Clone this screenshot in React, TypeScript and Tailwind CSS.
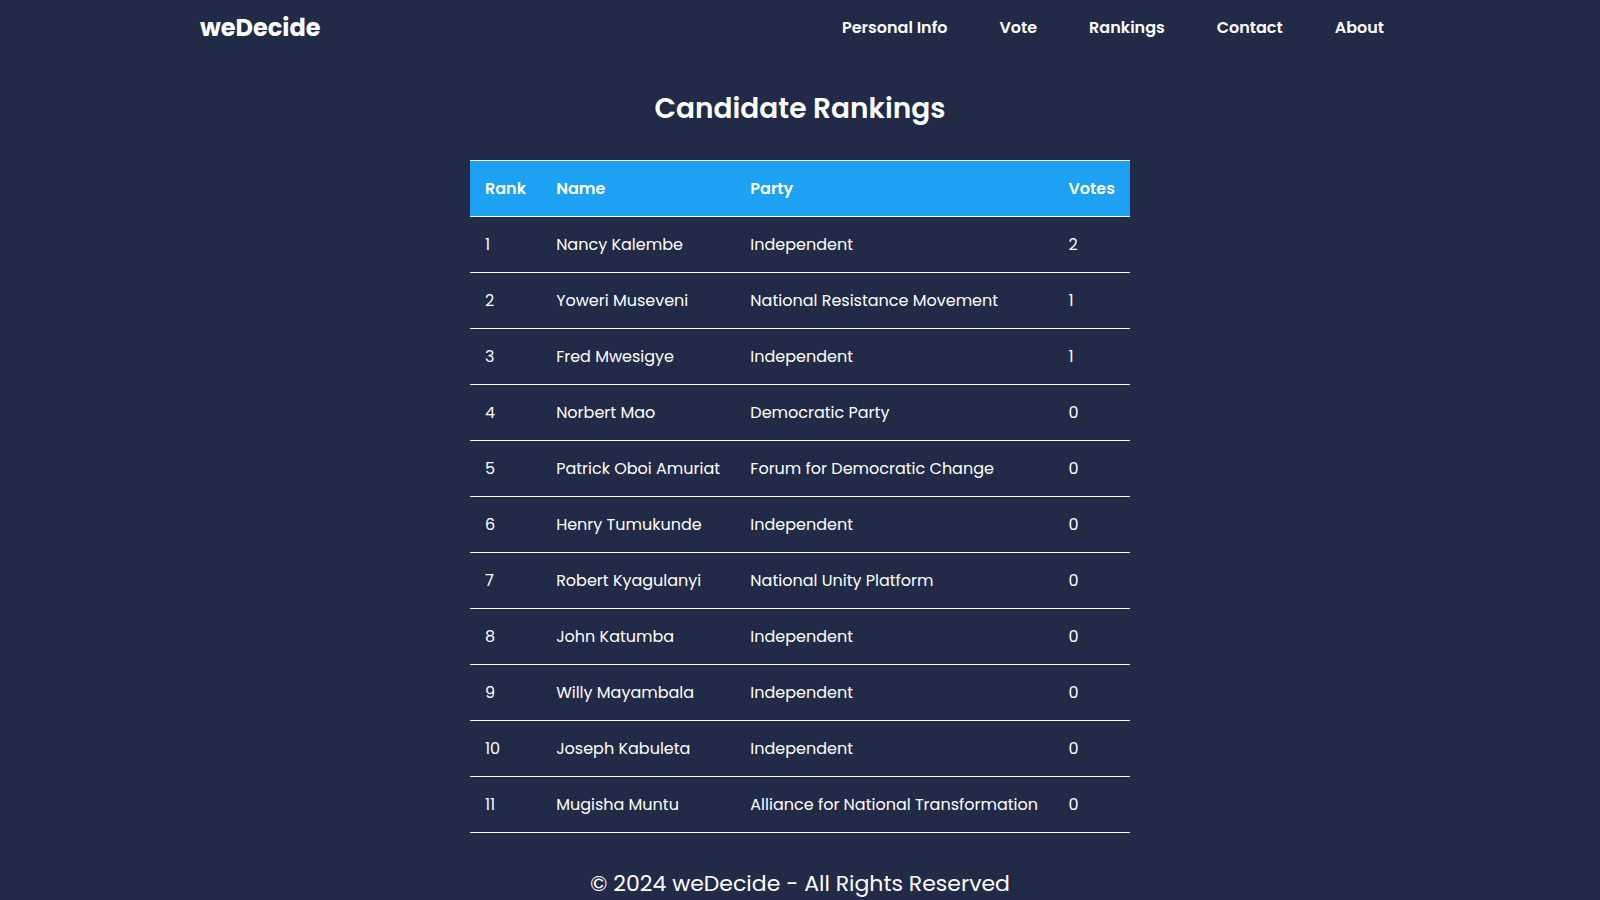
import React from 'react';

const candidates = [
  { rank: 1, name: 'Nancy Kalembe', party: 'Independent', votes: 2 },
  { rank: 2, name: 'Yoweri Museveni', party: 'National Resistance Movement', votes: 1 },
  { rank: 3, name: 'Fred Mwesigye', party: 'Independent', votes: 1 },
  { rank: 4, name: 'Norbert Mao', party: 'Democratic Party', votes: 0 },
  { rank: 5, name: 'Patrick Oboi Amuriat', party: 'Forum for Democratic Change', votes: 0 },
  { rank: 6, name: 'Henry Tumukunde', party: 'Independent', votes: 0 },
  { rank: 7, name: 'Robert Kyagulanyi', party: 'National Unity Platform', votes: 0 },
  { rank: 8, name: 'John Katumba', party: 'Independent', votes: 0 },
  { rank: 9, name: 'Willy Mayambala', party: 'Independent', votes: 0 },
  { rank: 10, name: 'Joseph Kabuleta', party: 'Independent', votes: 0 },
  { rank: 11, name: 'Mugisha Muntu', party: 'Alliance for National Transformation', votes: 0 },
];

const links = ['Personal Info', 'Vote', 'Rankings', 'Contact', 'About'];

const App = () => {
  return (
    <div className="min-h-screen bg-[#212a46] text-white font-['Poppins','Open_Sans',sans-serif]">
      {/* top bar */}
      <header className="mx-auto flex h-[55px] w-[1200px] items-center justify-between pr-4">
        <a className="text-[24px] font-bold">weDecide</a>
        <nav className="flex gap-[52px] text-[16px] font-semibold">
          {links.map((l) => (
            <a key={l}>{l}</a>
          ))}
        </nav>
      </header>

      <main className="flex flex-col items-center">
        <h2 className="mt-[34px] text-[28px] font-semibold leading-[40px]">Candidate Rankings</h2>

        <table className="mt-[31px] w-[660px] border-collapse whitespace-nowrap text-left text-[16px]">
          <thead>
            <tr className="h-[56px] border-y border-white bg-[#1da1f2]">
              <th className="px-[15px] font-semibold">Rank</th>
              <th className="px-[15px] font-semibold">Name</th>
              <th className="px-[15px] font-semibold">Party</th>
              <th className="px-[15px] font-semibold">Votes</th>
            </tr>
          </thead>
          <tbody>
            {candidates.map((c) => (
              <tr key={c.rank} className="h-[56px] border-b border-white">
                <td className="px-[15px]">{c.rank}</td>
                <td className="px-[15px]">{c.name}</td>
                <td className="px-[15px]">{c.party}</td>
                <td className="px-[15px]">{c.votes}</td>
              </tr>
            ))}
          </tbody>
        </table>
      </main>

      <footer className="pt-[34px] pb-4 text-center text-[22px]">© 2024 weDecide - All Rights Reserved</footer>
    </div>
  );
};

export default App;
